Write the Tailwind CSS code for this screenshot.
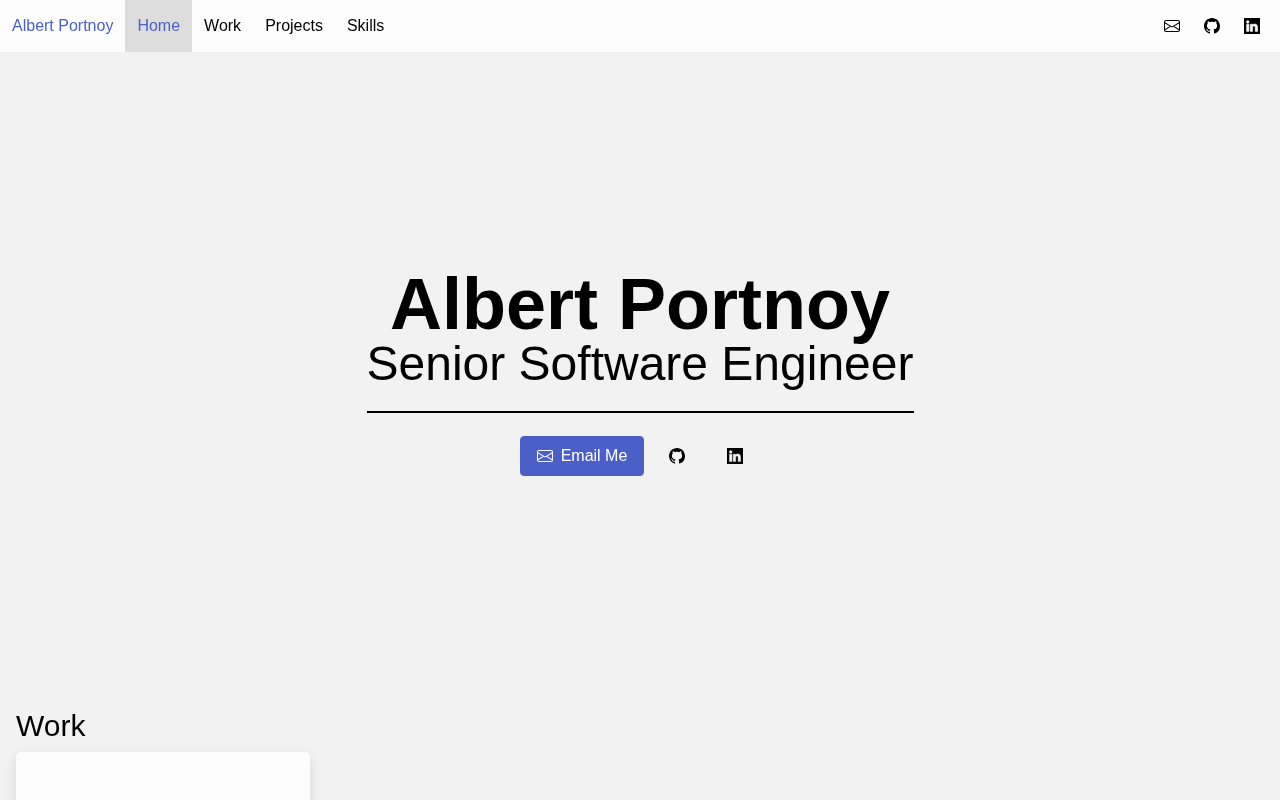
<!DOCTYPE html>
<html lang="en">
<head>
  <meta charset="UTF-8" />
  <meta name="viewport" content="width=device-width, initial-scale=1" />
  <title>Albert Portnoy</title>
  <script src="https://cdn.jsdelivr.net/npm/@tailwindcss/browser@4"></script>
</head>
<body class="bg-[#f2f2f2] text-black font-['Liberation_Sans',Arial,sans-serif] h-[800px] overflow-hidden">
  <nav class="h-[52px] bg-[#fdfdfd] flex items-stretch justify-between pr-2 text-base will-change-transform">
    <div class="flex items-stretch">
      <a href="#" class="flex items-center px-3 text-[#4a5fc7]">Albert Portnoy</a>
      <a href="#" class="flex items-center px-3 text-[#4a5fc7] bg-[#dddddd]">Home</a>
      <a href="#" class="flex items-center px-3">Work</a>
      <a href="#" class="flex items-center px-3">Projects</a>
      <a href="#" class="flex items-center px-3">Skills</a>
    </div>
    <div class="flex items-stretch">
      <a href="#" class="flex items-center px-3">
        <svg class="w-4 h-4" viewBox="0 0 16 16" fill="currentColor"><path d="M0 4a2 2 0 0 1 2-2h12a2 2 0 0 1 2 2v8a2 2 0 0 1-2 2H2a2 2 0 0 1-2-2V4zm2-1a1 1 0 0 0-1 1v.217l7 4.2 7-4.2V4a1 1 0 0 0-1-1H2zm13 2.383-4.758 2.855L15 11.114v-5.73zm-.034 6.878L9.271 8.82 8 9.583 6.728 8.82l-5.694 3.44A1 1 0 0 0 2 13h12a1 1 0 0 0 .966-.739zM1 11.114l4.758-2.876L1 5.383v5.73z"/></svg>
      </a>
      <a href="#" class="flex items-center px-3">
        <svg class="w-4 h-4" viewBox="0 0 16 16" fill="currentColor"><path d="M8 0C3.58 0 0 3.58 0 8c0 3.54 2.29 6.53 5.47 7.59.4.07.55-.17.55-.38 0-.19-.01-.82-.01-1.49-2.01.37-2.53-.49-2.69-.94-.09-.23-.48-.94-.82-1.13-.28-.15-.68-.52-.01-.53.63-.01 1.08.58 1.23.82.72 1.21 1.87.87 2.33.66.07-.52.28-.87.51-1.07-1.78-.2-3.64-.89-3.64-3.95 0-.87.31-1.59.82-2.15-.08-.2-.36-1.02.08-2.12 0 0 .67-.21 2.2.82.64-.18 1.32-.27 2-.27.68 0 1.36.09 2 .27 1.53-1.04 2.2-.82 2.2-.82.44 1.1.16 1.92.08 2.12.51.56.82 1.27.82 2.15 0 3.07-1.87 3.75-3.65 3.95.29.25.54.73.54 1.48 0 1.07-.01 1.93-.01 2.2 0 .21.15.46.55.38A8.012 8.012 0 0 0 16 8c0-4.42-3.58-8-8-8z"/></svg>
      </a>
      <a href="#" class="flex items-center px-3">
        <svg class="w-4 h-4" viewBox="0 0 16 16"><rect width="16" height="16" fill="currentColor"/><path fill="#fdfdfd" stroke="#fdfdfd" stroke-width=".5" d="M4.943 13.394V6.169H2.542v7.225h2.401zm-1.2-8.212c.837 0 1.358-.554 1.358-1.248-.015-.709-.52-1.248-1.342-1.248-.822 0-1.359.54-1.359 1.248 0 .694.521 1.248 1.327 1.248h.016zm4.908 8.212V9.359c0-.216.016-.432.08-.586.173-.431.568-.878 1.232-.878.869 0 1.216.662 1.216 1.634v3.865h2.401V9.25c0-2.22-1.184-3.252-2.764-3.252-1.274 0-1.845.7-2.165 1.193V6.169h-2.4c.03.678 0 7.225 0 7.225h2.4z"/></svg>
      </a>
    </div>
  </nav>

  <section class="h-[648px] pb-2 flex flex-col items-center justify-center will-change-transform">
    <div class="flex flex-col items-center">
      <h1 class="text-[72px] leading-[72px] font-bold">Albert Portnoy</h1>
      <h2 class="w-[547px] text-center whitespace-nowrap text-[48px] leading-[48px] pb-[23px] border-b-2 border-black">Senior Software Engineer</h2>
      <div class="flex gap-2 mt-[23px]">
        <a href="#" class="flex items-center gap-2 h-10 px-4 border border-[#4a5fc7] rounded bg-[#4a5fc7] text-white">
          <svg class="w-4 h-4" viewBox="0 0 16 16" fill="currentColor"><path d="M0 4a2 2 0 0 1 2-2h12a2 2 0 0 1 2 2v8a2 2 0 0 1-2 2H2a2 2 0 0 1-2-2V4zm2-1a1 1 0 0 0-1 1v.217l7 4.2 7-4.2V4a1 1 0 0 0-1-1H2zm13 2.383-4.758 2.855L15 11.114v-5.73zm-.034 6.878L9.271 8.82 8 9.583 6.728 8.82l-5.694 3.44A1 1 0 0 0 2 13h12a1 1 0 0 0 .966-.739zM1 11.114l4.758-2.876L1 5.383v5.73z"/></svg>
          Email Me
        </a>
        <a href="#" class="flex items-center h-10 px-[17px]">
          <svg class="w-4 h-4" viewBox="0 0 16 16" fill="currentColor"><path d="M8 0C3.58 0 0 3.58 0 8c0 3.54 2.29 6.53 5.47 7.59.4.07.55-.17.55-.38 0-.19-.01-.82-.01-1.49-2.01.37-2.53-.49-2.69-.94-.09-.23-.48-.94-.82-1.13-.28-.15-.68-.52-.01-.53.63-.01 1.08.58 1.23.82.72 1.21 1.87.87 2.33.66.07-.52.28-.87.51-1.07-1.78-.2-3.64-.89-3.64-3.95 0-.87.31-1.59.82-2.15-.08-.2-.36-1.02.08-2.12 0 0 .67-.21 2.2.82.64-.18 1.32-.27 2-.27.68 0 1.36.09 2 .27 1.53-1.04 2.2-.82 2.2-.82.44 1.1.16 1.92.08 2.12.51.56.82 1.27.82 2.15 0 3.07-1.87 3.75-3.65 3.95.29.25.54.73.54 1.48 0 1.07-.01 1.93-.01 2.2 0 .21.15.46.55.38A8.012 8.012 0 0 0 16 8c0-4.42-3.58-8-8-8z"/></svg>
        </a>
        <a href="#" class="flex items-center h-10 px-[17px]">
          <svg class="w-4 h-4" viewBox="0 0 16 16"><rect width="16" height="16" fill="currentColor"/><path fill="#f2f2f2" stroke="#f2f2f2" stroke-width=".5" d="M4.943 13.394V6.169H2.542v7.225h2.401zm-1.2-8.212c.837 0 1.358-.554 1.358-1.248-.015-.709-.52-1.248-1.342-1.248-.822 0-1.359.54-1.359 1.248 0 .694.521 1.248 1.327 1.248h.016zm4.908 8.212V9.359c0-.216.016-.432.08-.586.173-.431.568-.878 1.232-.878.869 0 1.216.662 1.216 1.634v3.865h2.401V9.25c0-2.22-1.184-3.252-2.764-3.252-1.274 0-1.845.7-2.165 1.193V6.169h-2.4c.03.678 0 7.225 0 7.225h2.4z"/></svg>
        </a>
      </div>
    </div>
  </section>

  <section class="px-4 pt-2 will-change-transform">
    <h2 class="text-[30px] leading-[36px] mb-2">Work</h2>
    <div class="w-[294px] h-[300px] bg-[#fdfdfd] rounded-[5px] shadow-[0_4px_14px_rgba(0,0,0,0.1)]"></div>
  </section>
</body>
</html>
